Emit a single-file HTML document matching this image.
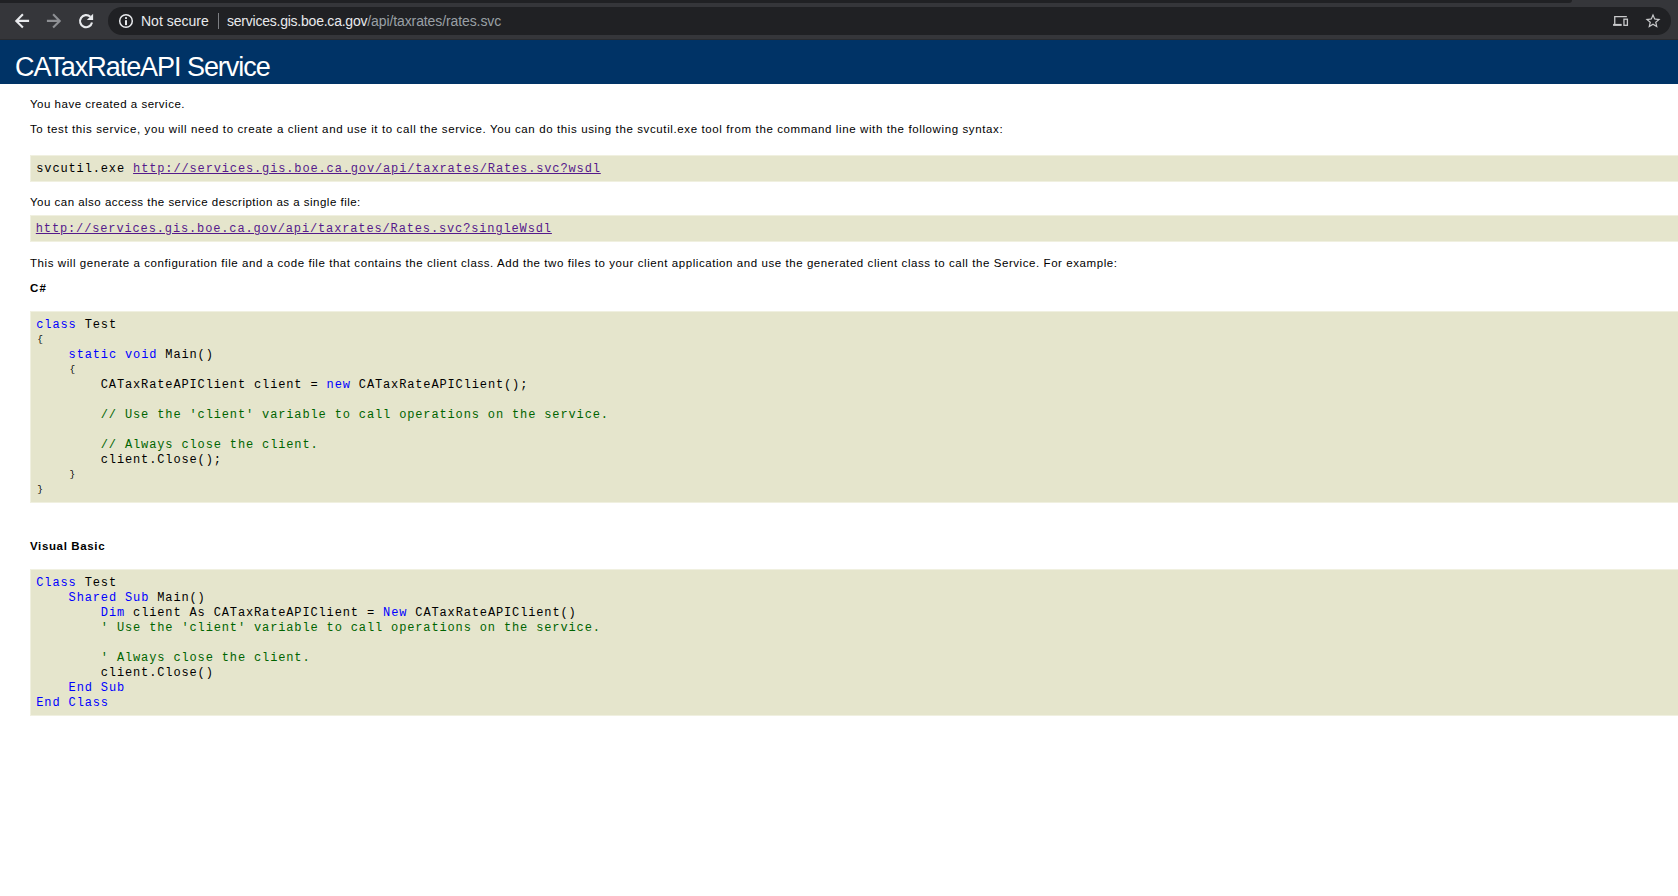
<!DOCTYPE html>
<html><head><meta charset="utf-8">
<style>
html,body{margin:0;padding:0;}
body{width:1678px;height:896px;overflow:hidden;background:#fff;position:relative;font-family:"Liberation Sans",sans-serif;}
.abs{position:absolute;white-space:pre;}
#chrome{position:absolute;left:0;top:0;width:1678px;height:40px;background:#35363a;}
#tabstrip{position:absolute;left:0;top:0;width:1572px;height:2.5px;background:#202124;border-bottom-right-radius:3px;}
#omni{position:absolute;left:108px;top:7px;width:1563px;height:28px;background:#202124;border-radius:14px;}
#chromeline{position:absolute;left:0;top:39px;width:1678px;height:1px;background:#2a2b2e;}
#head{position:absolute;left:0;top:40px;width:1678px;height:44px;background:#003366;}
.h1{font-size:27px;color:#fff;}
.p{font-size:11.5px;color:#000;}
.b{font-weight:bold;}
.pre{position:absolute;left:30px;width:1648px;background:#e5e5cc;border:1px solid #f0f0e0;border-right:none;box-sizing:border-box;}
.mono{font-family:"Liberation Mono",monospace;font-size:12px;letter-spacing:0.8625px;line-height:15px;}
a{color:#551a8b;text-decoration:underline;}
.k{color:#0000ff;}
.br{font-size:9.5px;letter-spacing:2.36px;position:relative;left:1px;top:-1.2px;}
.c{color:#006400;}
</style></head><body>
<div id="chrome">
  <div id="tabstrip"></div>
  <div id="omni"></div>
  <div id="chromeline"></div>
  <svg style="position:absolute;left:0;top:0;" width="100" height="40" viewBox="0 0 100 40">
    <path d="M29.1 20.9H16.6M22.9 14.3L16.3 20.9L22.9 27.5" fill="none" stroke="#e8eaed" stroke-width="2.1"/>
    <path d="M46.9 20.9H59.4M53.1 14.3L59.7 20.9L53.1 27.5" fill="none" stroke="#8e9094" stroke-width="2.1"/>
    <path d="M92 22.5A6.05 6.05 0 1 1 90.3 16.8" fill="none" stroke="#e8eaed" stroke-width="2.1"/>
    <path d="M86.8 19.9H93.1V13.7Z" fill="#e8eaed"/>
  </svg>
  <svg style="position:absolute;left:118px;top:13px;" width="16" height="16" viewBox="0 0 16 16"><circle cx="8" cy="8" r="6.3" fill="none" stroke="#e8eaed" stroke-width="1.5"/><rect x="7" y="4.2" width="2" height="1.7" fill="#e8eaed"/><rect x="7" y="7.2" width="2" height="4.9" fill="#e8eaed"/></svg>
  <div class="abs" id="u_ns" style="left:141px;top:13px;font-size:14px;color:#e8eaed;">Not secure</div>
  <div style="position:absolute;left:217.5px;top:13px;width:1px;height:16px;background:#7c7e82;"></div>
  <div class="abs" id="u_host" style="letter-spacing:-0.23px;left:227px;top:13px;font-size:14px;color:#e8eaed;">services.gis.boe.ca.gov<span style="color:#9aa0a6;letter-spacing:-0.1px;">/api/taxrates/rates.svc</span></div>
  <svg style="position:absolute;left:1612px;top:13px;" width="18" height="16" viewBox="0 0 18 16">
    <path d="M2.75 11.5V3.65h12.1" fill="none" stroke="#c9cacc" stroke-width="1.3"/>
    <rect x="1.1" y="10.9" width="8.6" height="2" fill="#c9cacc"/>
    <rect x="11.95" y="6.2" width="3.45" height="6.1" fill="none" stroke="#c9cacc" stroke-width="1.3"/>
  </svg>
  <svg style="position:absolute;left:1644.2px;top:12.4px;" width="18" height="18" viewBox="0 0 24 24"><path fill="#c9cacc" d="M22 9.24l-7.19-.62L12 2 9.19 8.63 2 9.24l5.46 4.730L5.82 21 12 17.27 18.18 21l-1.63-7.03L22 9.24zM12 15.4l-3.76 2.27 1-4.28-3.32-2.88 4.38-.38L12 6.1l1.71 4.04 4.38.38-3.32 2.88 1 4.28L12 15.4z"/></svg>
</div>
<div id="head"></div>
<div class="abs h1" id="t_h1" style="letter-spacing:-1.05px;left:15px;top:52px;">CATaxRateAPI Service</div>

<div class="abs p" id="t1" style="letter-spacing:0.500px;left:30px;top:98px;">You have created a service.</div>
<div class="abs p" id="t2" style="letter-spacing:0.616px;left:30px;top:123px;">To test this service, you will need to create a client and use it to call the service. You can do this using the svcutil.exe tool from the command line with the following syntax:</div>

<div class="pre" style="top:155px;height:26.5px;"></div>
<div class="abs mono" style="left:36.3px;top:162px;">svcutil.exe <a>http://services.gis.boe.ca.gov/api/taxrates/Rates.svc?wsdl</a></div>

<div class="abs p" id="t3" style="letter-spacing:0.483px;left:30px;top:196px;">You can also access the service description as a single file:</div>

<div class="pre" style="top:215px;height:26.5px;"></div>
<div class="abs mono" style="left:35.8px;top:222px;"><a>http://services.gis.boe.ca.gov/api/taxrates/Rates.svc?singleWsdl</a></div>

<div class="abs p" id="t4" style="letter-spacing:0.570px;left:30px;top:257px;">This will generate a configuration file and a code file that contains the client class. Add the two files to your client application and use the generated client class to call the Service. For example:</div>
<div class="abs p b" id="t5" style="letter-spacing:1.200px;left:30px;top:282px;">C#</div>

<div class="pre" style="top:311px;height:191.5px;"></div>
<div class="abs mono" style="left:36.3px;top:318px;"><span class="k">class</span> Test
<span class="br">{</span>
    <span class="k">static</span> <span class="k">void</span> Main()
    <span class="br">{</span>
        CATaxRateAPIClient client = <span class="k">new</span> CATaxRateAPIClient();

<span class="c">        // Use the 'client' variable to call operations on the service.</span>

<span class="c">        // Always close the client.</span>
        client.Close();
    <span class="br">}</span>
<span class="br">}</span></div>

<div class="abs p b" id="t6" style="letter-spacing:0.636px;left:30px;top:540px;">Visual Basic</div>

<div class="pre" style="top:569px;height:146.5px;"></div>
<div class="abs mono" style="left:36.3px;top:576px;"><span class="k">Class</span> Test
    <span class="k">Shared</span> <span class="k">Sub</span> Main()
        <span class="k">Dim</span> client As CATaxRateAPIClient = <span class="k">New</span> CATaxRateAPIClient()
<span class="c">        ' Use the 'client' variable to call operations on the service.</span>

<span class="c">        ' Always close the client.</span>
        client.Close()
    <span class="k">End</span> <span class="k">Sub</span>
<span class="k">End</span> <span class="k">Class</span></div>
</body></html>
